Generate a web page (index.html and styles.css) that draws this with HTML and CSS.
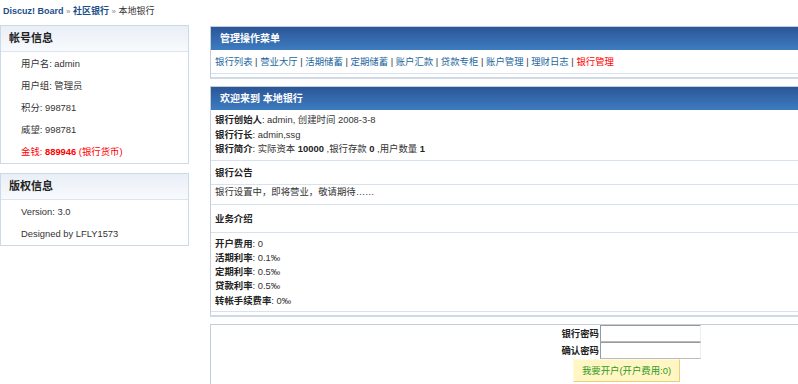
FILE: index.html
```html
<!DOCTYPE html>
<html>
<head>
<meta charset="utf-8" />
<title>本地银行</title>
<link rel="stylesheet" href="styles.css">
</head>
<body>
<div class="nav">
	<a href="#" class="navlink">Discuz! Board</a> <span class="raquo">&raquo;</span> <a href="#" class="navlink">社区银行</a> <span class="raquo">&raquo;</span> 本地银行
</div>
<div class="wrap">
	<div class="side">
		<div class="sbox">
			<div class="shead">帐号信息</div>
			<ul class="slist">
				<li>用户名: admin</li>
				<li>用户组: 管理员</li>
				<li>积分: 998781</li>
				<li>威望: 998781</li>
				<li class="money">金钱: <b>889946</b> (银行货币)</li>
			</ul>
		</div>
		<div class="sbox">
			<div class="shead">版权信息</div>
			<ul class="slist">
				<li>Version: 3.0</li>
				<li>Designed by LFLY1573</li>
			</ul>
		</div>
	</div>
	<div class="main">
		<div class="mbox">
			<div class="mhead">管理操作菜单</div>
			<div class="menu">
				<a href="#">银行列表</a> | <a href="#">营业大厅</a> | <a href="#">活期储蓄</a> | <a href="#">定期储蓄</a> | <a href="#">账户汇款</a> | <a href="#">贷款专柜</a> | <a href="#">账户管理</a> | <a href="#">理财日志</a> | <a href="#" class="cur">银行管理</a>
			</div>
			<div class="mfoot"></div>
		</div>
		<div class="mbox">
			<div class="mhead">欢迎来到 本地银行</div>
			<div class="info">
				<p><b>银行创始人</b>: admin, 创建时间 2008-3-8</p>
				<p><b>银行行长</b>: admin,ssg</p>
				<p><b>银行简介</b>: 实际资本 <b>10000</b> ,银行存款 <b>0</b> ,用户数量 <b>1</b></p>
			</div>
			<div class="sub sub1">银行公告</div>
			<div class="notice">银行设置中，即将营业，敬请期待……</div>
			<div class="sub sub2">业务介绍</div>
			<div class="rates">
				<p><b>开户费用</b>: 0</p>
				<p><b>活期利率</b>: 0.1‰</p>
				<p><b>定期利率</b>: 0.5‰</p>
				<p><b>贷款利率</b>: 0.5‰</p>
				<p><b>转帐手续费率</b>: 0‰</p>
			</div>
			<div class="mfoot"></div>
		</div>
		<div class="mbox fbox">
			<div class="form">
				<label>银行密码</label><input type="password" />
				<label>确认密码</label><input type="password" />
			</div>
			<button class="open">我要开户(开户费用:0)</button>
		</div>
	</div>
</div>
</body>
</html>
```

FILE: styles.css
```css
*{
	margin:0;
	padding:0;
}
html,body{
	width:100%;
	height:100%;
	overflow:hidden;
}
body{
	background:#fff;
	font:9.4px/14px "Liberation Sans","Noto Sans CJK SC",sans-serif;
	color:#333;
}
a{
	text-decoration:none;
}
.nav{
	height:25px;
	padding:5px 0 0 3px;
	box-sizing:border-box;
	line-height:12px;
	font-size:9px;
	color:#333;
}
.navlink{
	color:#1d4f8a;
	font-weight:bold;
}
.raquo{
	color:#888;
	font-size:8px;
}
.wrap{
	display:flex;
	gap:21px;
	width:798px;
	height:359px;
	overflow:hidden;
}
/* 左边栏 */
.side{
	width:189px;
	flex:none;
	display:flex;
	flex-direction:column;
	gap:9px;
}
.sbox{
	border:1px solid #cbd9e8;
}
.shead{
	height:25px;
	line-height:25px;
	padding-left:8px;
	font-size:11px;
	font-weight:bold;
	color:#222;
	background:linear-gradient(#e9eff7,#f8fafd);
	border-bottom:1px solid #dbe5ef;
}
.slist{
	list-style:none;
	padding-top:1px;
}
.slist li{
	height:22px;
	line-height:22px;
	padding-left:20px;
}
.money{
	color:#f00;
}
/* 右侧 */
.main{
	flex:none;
	width:620px;
	margin-top:1px;
	display:flex;
	flex-direction:column;
	gap:7px;
}
.mbox{
	border:1px solid #c4cfdc;
	border-bottom:2px solid #cfdae6;
}
.mhead{
	height:23px;
	line-height:23px;
	padding-left:9px;
	font-size:10px;
	font-weight:bold;
	color:#fff;
	background:linear-gradient(#2b5596,#3467aa 45%,#3d7cc0);
}
.menu{
	height:23px;
	line-height:23px;
	padding-left:4px;
	color:#333;
	border-bottom:1px solid #d7e2ee;
}
.menu a{
	color:#23679e;
}
.menu a.cur{
	color:#f00;
}
.mfoot{
	height:3px;
}
.info{
	padding:3px 4px 3px;
	line-height:14.5px;
	border-bottom:1px solid #d7e2ee;
}
.info b,.rates b{
	color:#222;
}
.sub{
	padding-left:4px;
	font-weight:bold;
	color:#222;
	border-bottom:1px solid #d7e2ee;
}
.sub1{
	height:23px;
	line-height:23px;
}
.sub2{
	height:27px;
	line-height:28px;
}
.notice{
	height:19px;
	line-height:14px;
	padding-left:4px;
	border-bottom:1px solid #d7e2ee;
}
.rates{
	padding:4px 4px 3px;
	line-height:14.25px;
	border-bottom:1px solid #d7e2ee;
}
.fbox{
	height:59px;
	border-bottom:none;
}
.form{
	display:grid;
	grid-template-columns:60px 101px;
	column-gap:1px;
	margin-left:328px;
}
.form label{
	text-align:right;
	font-weight:bold;
	color:#222;
	line-height:17px;
}
.form input{
	width:101px;
	height:17px;
	box-sizing:border-box;
	border:1px solid;
	border-color:#999 #eee #bbb #999;
	background:#fff;
}
.open{
	display:block;
	margin-left:362px;
	width:107px;
	height:23px;
	font:9.4px "Liberation Sans","Noto Sans CJK SC",sans-serif;
	color:#2f9a1e;
	background:#fff6c4;
	border:1px solid;
	border-color:#fffbe2 #e9cf7a #e9cf7a #fffbe2;
}
```
